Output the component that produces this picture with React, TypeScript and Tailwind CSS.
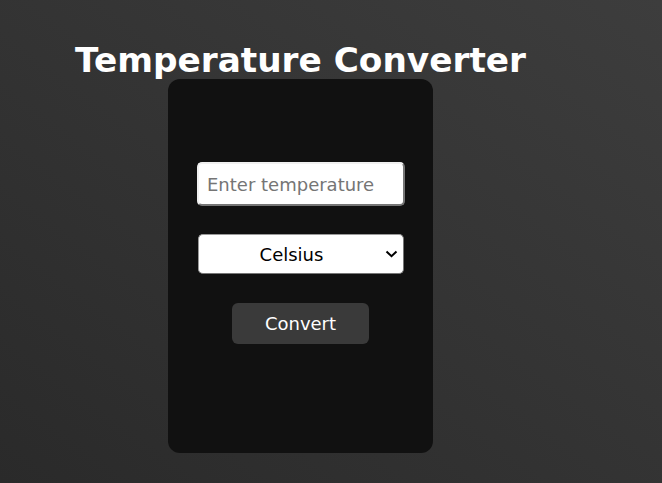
import React from "react";

export default function App() {
  return (
    <div
      className="min-h-screen w-full bg-[linear-gradient(to_bottom_left,#3d3d3d,#2a2a2a)] overflow-hidden"
      style={{ fontFamily: '"DejaVu Sans", Verdana, sans-serif' }}
    >
      <div className="ml-[168px] w-[265px] pt-[41px] flex flex-col items-center">
        <h1 className="whitespace-nowrap text-[34.3px] font-bold leading-[38px] text-white">
          Temperature Converter
        </h1>
        <div className="w-[265px] h-[374px] rounded-[12px] bg-[#111111] flex flex-col items-center pt-[83px]">
          <input
            type="text"
            placeholder="Enter temperature"
            className="ml-[1px] w-[208px] h-[44px] rounded-[5px] bg-white px-[8px] text-[18px] text-black placeholder:text-[#757575] border-2 border-t-[#f0f0f0] border-l-[#f0f0f0] border-b-[#767676] border-r-[#767676] outline-none"
          />
          <div className="relative mt-[28px] w-[206px] h-[40px]">
            <select
              defaultValue="Celsius"
              className="appearance-none w-full h-full rounded-[5px] bg-white text-black text-[18px] text-center border border-[#9a9a9a] border-b-[#767676] border-r-[#767676] outline-none pr-[18px]"
            >
              <option>Celsius</option>
              <option>Fahrenheit</option>
              <option>Kelvin</option>
            </select>
            <svg
              className="pointer-events-none absolute right-[6px] top-[16px]"
              width="13"
              height="8"
              viewBox="0 0 13 8"
            >
              <path d="M1.5 1.5 L6.5 6.2 L11.5 1.5" fill="none" stroke="#000" strokeWidth="2" />
            </svg>
          </div>
          <button className="mt-[29px] w-[137px] h-[41px] rounded-[6px] bg-[#3a3a3a] text-white text-[18px]">
            Convert
          </button>
        </div>
      </div>
    </div>
  );
}
